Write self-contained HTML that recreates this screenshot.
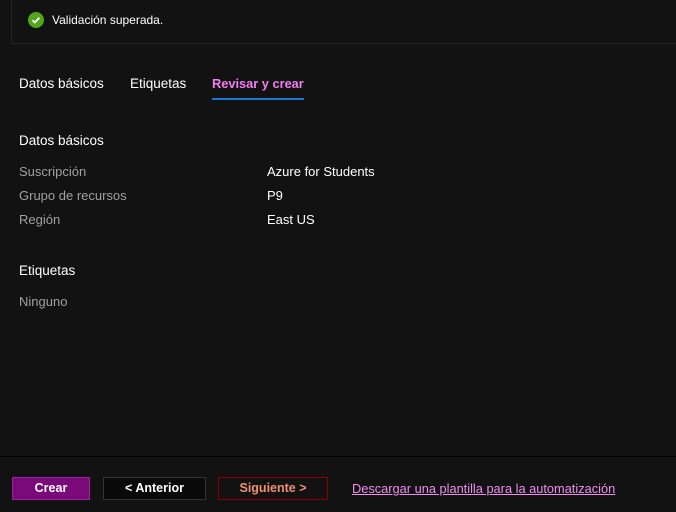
<!DOCTYPE html>
<html><head><meta charset="utf-8"><style>
*{margin:0;padding:0;box-sizing:border-box}
body{width:676px;height:512px;background:#121212;font-family:"Liberation Sans",sans-serif;color:#fff;position:relative;overflow:hidden;font-size:13px}
.a{position:absolute;white-space:nowrap}
.box{position:absolute;left:11px;top:-2px;width:680px;height:46px;border:1px solid #26261c}
.g{color:#a0a0a0}
.btn{position:absolute;top:477px;height:23px;text-align:center;line-height:21px;font-weight:bold;font-size:12.5px}
</style></head><body>
<div class="box"></div>
<svg class="a" style="left:28px;top:12px" width="16" height="16"><circle cx="8" cy="8" r="8" fill="#55a51c"/><path d="M4.5 8.2l2.3 2.3 4.6-4.8" stroke="#fff" stroke-width="1.8" fill="none"/></svg>
<div class="a" style="left:52px;top:13px;font-size:12px">Validación superada.</div>
<div class="a" style="left:19px;top:76px;font-size:13.5px">Datos básicos</div>
<div class="a" style="left:130px;top:76px;font-size:13.5px">Etiquetas</div>
<div class="a" style="left:212px;top:76px;font-size:12.8px;font-weight:bold;color:#f07ef0">Revisar y crear</div>
<div class="a" style="left:212px;top:98px;width:92px;height:2px;background:#1a78d2"></div>
<div class="a" style="left:19px;top:133px;font-size:13.5px">Datos básicos</div>
<div class="a g" style="left:19px;top:164px">Suscripción</div>
<div class="a g" style="left:19px;top:188px">Grupo de recursos</div>
<div class="a g" style="left:19px;top:212px">Región</div>
<div class="a" style="left:267px;top:164px">Azure for Students</div>
<div class="a" style="left:267px;top:188px">P9</div>
<div class="a" style="left:267px;top:212px">East US</div>
<div class="a" style="left:19px;top:263px;font-size:13.5px">Etiquetas</div>
<div class="a g" style="left:19px;top:294px">Ninguno</div>
<div class="a" style="left:0;top:456px;width:676px;height:1px;background:#000"></div>
<div class="btn a" style="left:12px;width:78px;background:#7a0a7a;border:1px solid #a020a0">Crear</div>
<div class="btn a" style="left:103px;width:103px;background:#0a0a0a;border:1px solid #333">&lt; Anterior</div>
<div class="btn a" style="left:218px;width:110px;background:#121212;border:1px solid #8a0000;color:#f09070">Siguiente &gt;</div>
<div class="a" style="left:352px;top:481px;color:#f08ef0;text-decoration:underline;font-size:12.8px">Descargar una plantilla para la automatización</div>
</body></html>
